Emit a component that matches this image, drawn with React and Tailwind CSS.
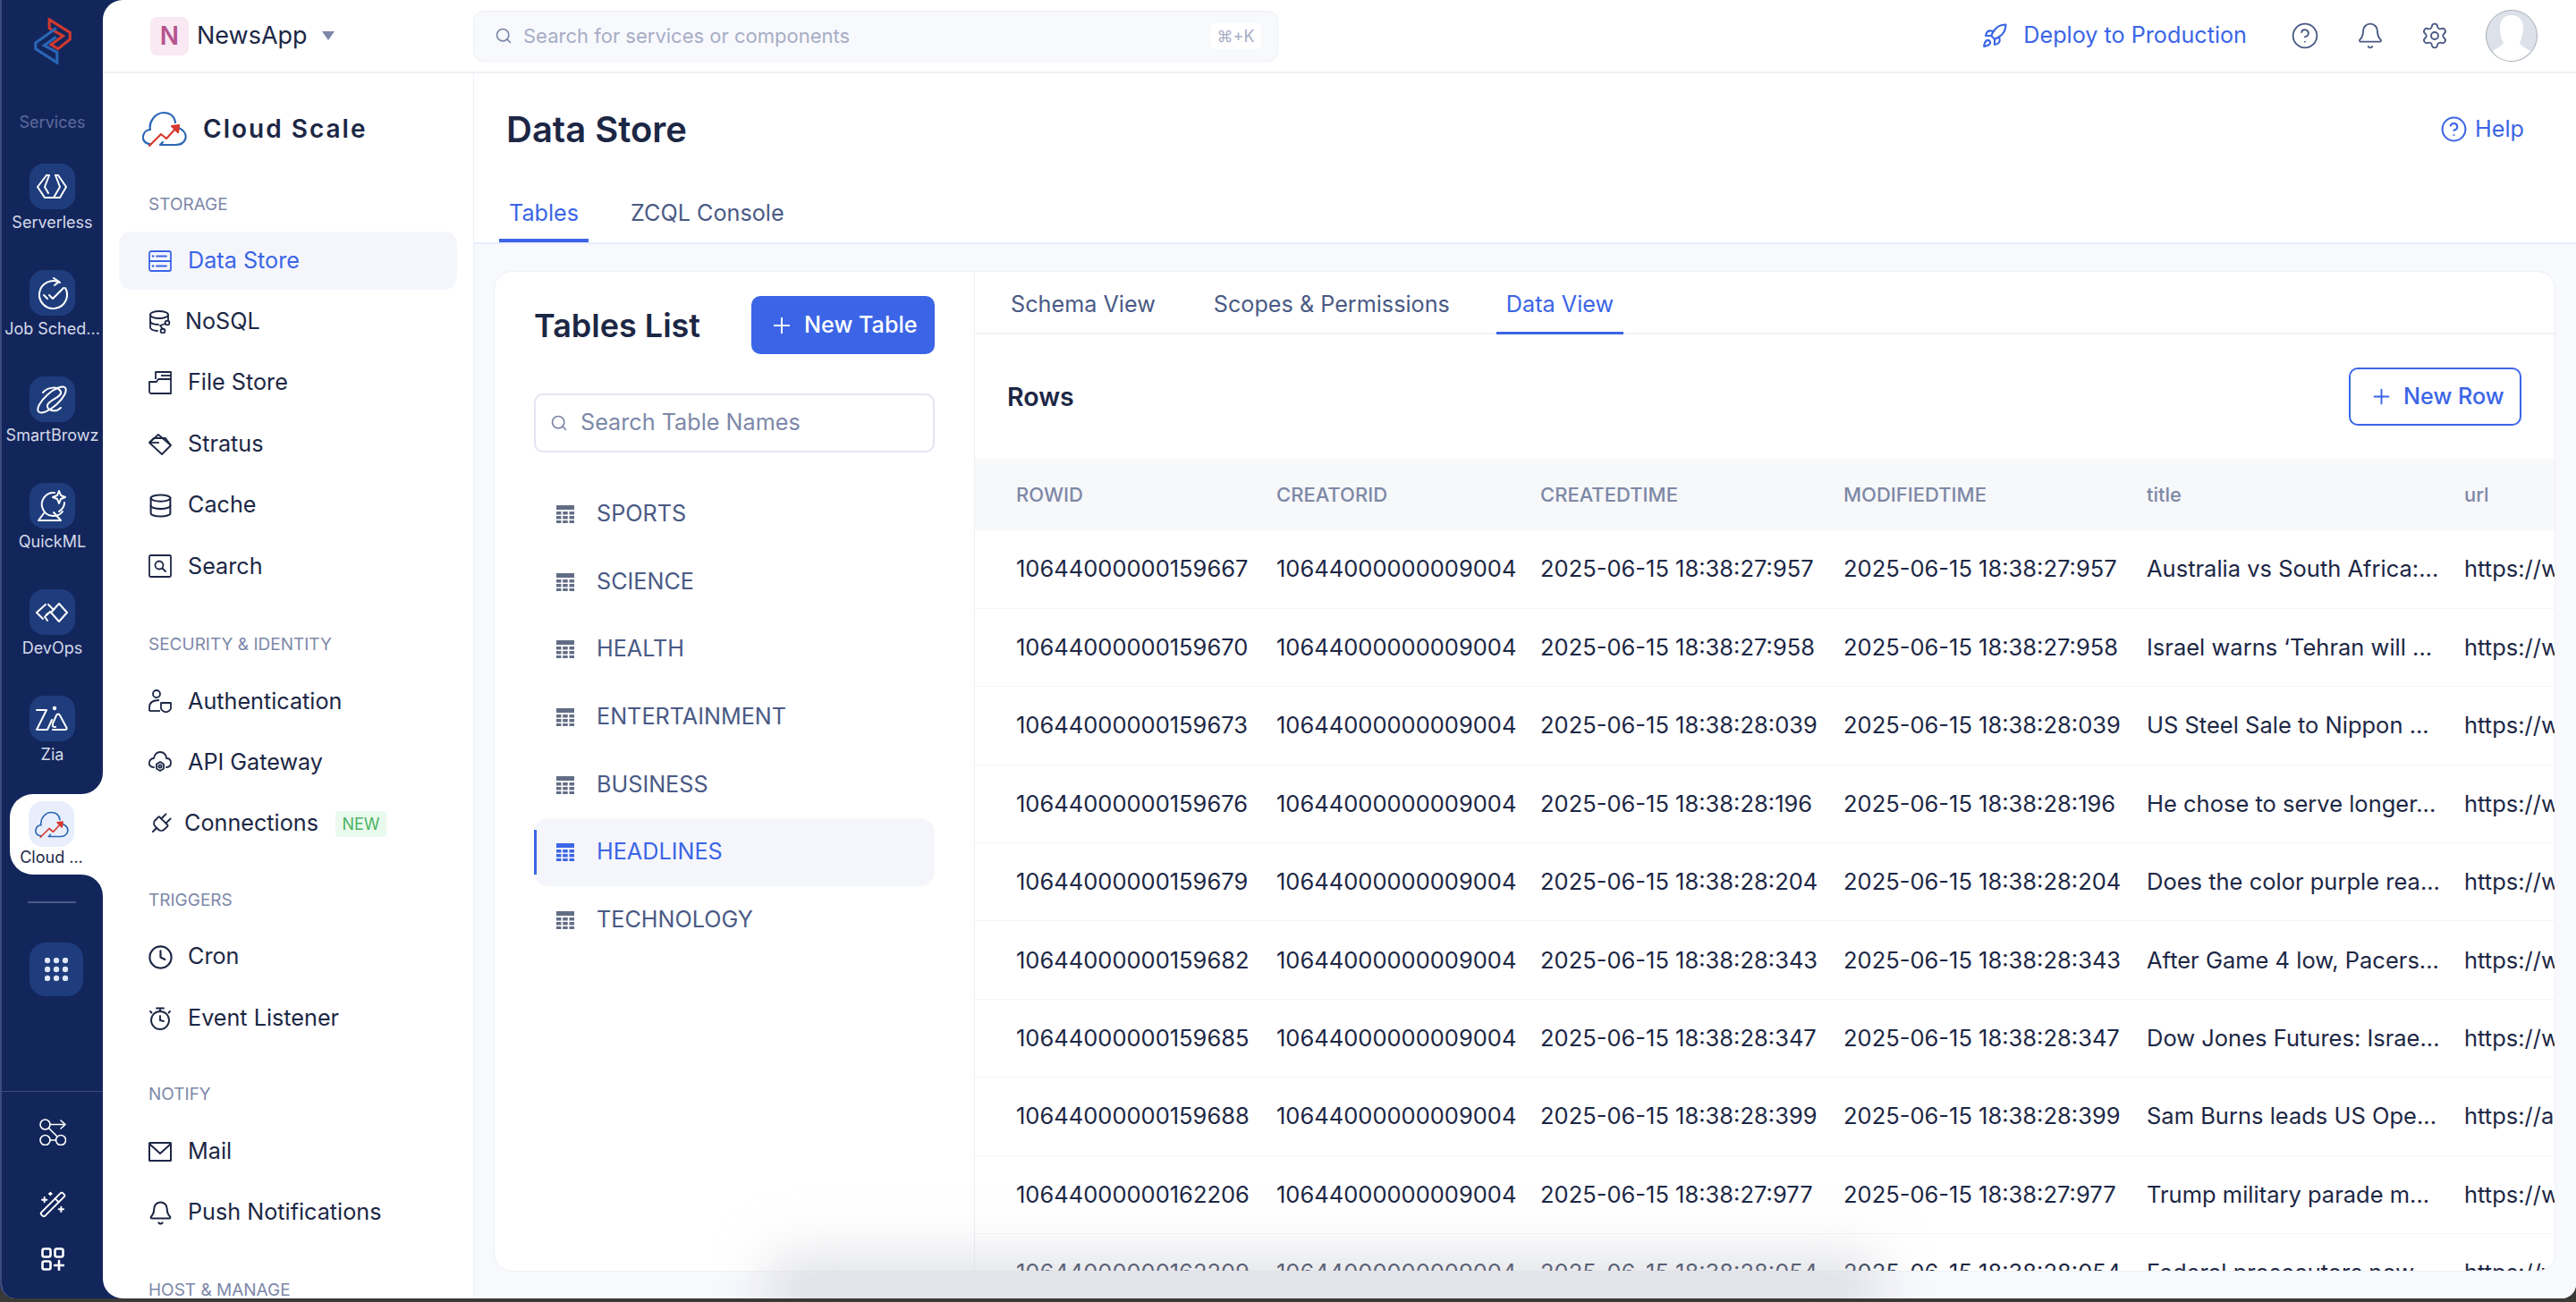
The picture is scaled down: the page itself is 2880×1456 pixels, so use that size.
import React from "react";
import {
  Bell,
  CircleHelp,
  Clock,
  Database,
  Plug,
  Plus,
  Rocket,
  Search,
  Settings,
  WandSparkles,
} from "lucide-react";

const RAIL_STROKE = { fill: "none", stroke: "white", strokeWidth: 2, strokeLinecap: "round", strokeLinejoin: "round" };

function CatalystLogo() {
  return (
    <svg viewBox="0 0 44 54" className="w-[44px] h-[52px]" fill="none" strokeWidth="3.2" strokeLinejoin="miter">
      <path d="M18 2 L42 17 V25 L28 36 L20 31 L34 21 L18 12 Z" stroke="#d0392f" />
      <path d="M26 12 L2 29 V36 L27 52 V40 L12 32 L26 22" stroke="#2a66b5" />
    </svg>
  );
}

function CloudLogo({ className }) {
  return (
    <svg viewBox="0 0 50 40" className={className} fill="none" strokeWidth="2.2" strokeLinecap="round" strokeLinejoin="round">
      <path d="M9 37 C3 37 0 32 1 28 C2 23 6 21 9 21 C7 12 15 2 24 2 C31 2 36 6 37 13" stroke="#2a66b5" />
      <path d="M41 19 C47 22 50 27 48 32 C46 37 41 38 37 38 H20 L23 35" stroke="#2a66b5" />
      <path d="M8 39 L21 26 L27 31 L39 18" stroke="#d8392f" />
      <path d="M33 17 L41 16 L40 24 Z" fill="#d8392f" stroke="#d8392f" />
    </svg>
  );
}

function ServerlessIcon() {
  return (
    <svg viewBox="0 0 36 30" className="w-[36px] h-[30px]" {...RAIL_STROKE}>
      <path d="M12 2 L2 15 L10 27 H27 L34 15 L25 2 L22 2" />
      <path d="M12 2 H15 L10 15 L14 22" />
      <path d="M22 2 L27 15 L20 27" />
    </svg>
  );
}

function JobIcon() {
  return (
    <svg viewBox="0 0 36 36" className="w-[36px] h-[36px]" {...RAIL_STROKE}>
      <path d="M27 6 A15.5 15.5 0 1 0 33 12" />
      <path d="M20 1 L26 5 L21 9" />
      <path d="M15 20 L19 24 L31 12" />
      <path d="M9 20 L13 24" />
    </svg>
  );
}

function BrowzIcon() {
  return (
    <svg viewBox="0 0 36 34" className="w-[36px] h-[34px]" {...RAIL_STROKE}>
      <ellipse cx="18" cy="17" rx="20" ry="7.5" transform="rotate(-42 18 17)" />
      <path d="M8 9 C14 2 25 2 28 8 C30 14 15 17 13 23 C12 29 22 32 28 26" />
    </svg>
  );
}

function QuickMlIcon() {
  return (
    <svg viewBox="0 0 36 36" className="w-[36px] h-[36px]" {...RAIL_STROKE}>
      <path d="M21 3 A13 13 0 1 0 30 24" />
      <path d="M20 25 L28 34 H3 L9 26" />
      <path d="M32 14 C32 18 29 22 26 24" />
      <path d="M26 1 L28 6 L33 8 L28 10 L26 15 L24 10 L19 8 L24 6 Z" />
    </svg>
  );
}

function DevOpsIcon() {
  return (
    <svg viewBox="0 0 36 22" className="w-[36px] h-[22px]" {...RAIL_STROKE}>
      <path d="M14 2 L20 8" />
      <path d="M11 2 L1 11 L8 18" />
      <path d="M16 10 L12 14 M13 12 L10 16 M11 17 L13 20" />
      <path d="M26 1 L35 11 L26 21 L17 11 Z" />
    </svg>
  );
}

function ZiaIcon() {
  return (
    <svg viewBox="0 0 36 30" className="w-[36px] h-[30px]" {...RAIL_STROKE}>
      <path d="M1 5 H12 L1 27 H13 L18 16" />
      <path d="M19 27 H33 C35 27 35 25 34 24 L27 11 C26 9 24 9 23 11 L19 20 C18 24 20 24 22 24" />
      <circle cx="21" cy="3" r="1.2" fill="white" />
    </svg>
  );
}

function GripIcon() {
  return (
    <svg viewBox="0 0 26 26" className="w-[26px] h-[26px]" fill="#dfe6f7">
      {[3, 13, 23].map((cy) =>
        [3, 13, 23].map((cx) => <circle key={`${cx}-${cy}`} cx={cx} cy={cy} r="3.2" />)
      )}
    </svg>
  );
}

function FlowIcon() {
  return (
    <svg viewBox="0 0 30 30" className="w-[30px] h-[30px]" {...RAIL_STROKE} strokeWidth="1.6">
      <circle cx="6.5" cy="6.5" r="5.5" />
      <circle cx="6.5" cy="24" r="5.5" />
      <circle cx="24" cy="24" r="5.5" />
      <path d="M12 24 H18.5" />
      <path d="M10.5 10.5 L20 20" />
      <path d="M12 6.5 H29 M24 2 L29 6.5 L24 11" />
    </svg>
  );
}

function AddAppsIcon() {
  return (
    <svg viewBox="0 0 26 26" className="w-[26px] h-[26px]" fill="none" stroke="white" strokeWidth="2.6" strokeLinejoin="round" strokeLinecap="round">
      <rect x="1.5" y="1.5" width="9" height="9" rx="2" />
      <rect x="15.5" y="1.5" width="9" height="9" rx="2" />
      <rect x="1.5" y="15.5" width="9" height="9" rx="2" />
      <path d="M20 15 V25 M15 20 H25" />
    </svg>
  );
}

function DataStoreIcon() {
  return (
    <svg viewBox="0 0 26 24" className="w-[26px] h-[24px]" fill="none" stroke="#3b65e6" strokeWidth="1.8" strokeLinecap="round">
      <rect x="1" y="1" width="24" height="22" rx="2" />
      <path d="M1 12 H25 M9 6.5 H20 M9 17.5 H20" />
      <path d="M5 6.5 H5.1 M5 17.5 H5.1" strokeWidth="2.6" />
    </svg>
  );
}

function NosqlIcon() {
  return (
    <svg viewBox="0 0 24 26" className="w-[24px] h-[26px]" fill="none" stroke="#1c2745" strokeWidth="1.8" strokeLinecap="round" strokeLinejoin="round">
      <ellipse cx="11" cy="5" rx="10" ry="4" />
      <path d="M1 5 V19 C1 21 4 23 9 23" />
      <path d="M21 5 V11" />
      <path d="M1 12 C1 14 4 16 10 16" />
      <circle cx="20" cy="14" r="2.4" />
      <circle cx="15" cy="23" r="2.4" />
      <path d="M18 15 L12 17 L15 21" />
    </svg>
  );
}

function FileStoreIcon() {
  return (
    <svg viewBox="0 0 26 26" className="w-[26px] h-[26px]" fill="none" stroke="#1c2745" strokeWidth="1.8" strokeLinejoin="round">
      <path d="M1 12 H9 L11 9 H25 V25 H3 C2 25 1 24 1 23 Z" />
      <path d="M8 9 V1 H25 V9" />
      <path d="M14 5 H25" />
    </svg>
  );
}

function StratusIcon() {
  return (
    <svg viewBox="0 0 26 24" className="w-[26px] h-[24px]" fill="none" stroke="#1c2745" strokeWidth="1.8" strokeLinejoin="round">
      <path d="M1 10 L11 1 L25 13 L15 23 Z" />
      <path d="M1 10 L6 5 L19 5 L25 13" />
      <path d="M1 10 L12 10" />
    </svg>
  );
}

function SearchBoxIcon() {
  return (
    <svg viewBox="0 0 26 26" className="w-[26px] h-[26px]" fill="none" stroke="#1c2745" strokeWidth="1.8" strokeLinecap="round">
      <rect x="1" y="1" width="24" height="24" rx="1.5" />
      <circle cx="12" cy="12" r="4.5" />
      <path d="M15.5 15.5 L19 19" />
    </svg>
  );
}

function AuthIcon() {
  return (
    <svg viewBox="0 0 26 26" className="w-[26px] h-[26px]" fill="none" stroke="#1c2745" strokeWidth="1.8" strokeLinejoin="round">
      <circle cx="9" cy="5" r="4" />
      <path d="M1 24 V20 C1 15 5 12 12 12" />
      <path d="M1 24 H13" />
      <path d="M14 15 H25 V21 C25 23 22 25 19.5 25.5 C17 25 14 23 14 21 Z" />
    </svg>
  );
}

function ApiIcon() {
  return (
    <svg viewBox="0 0 26 26" className="w-[26px] h-[26px]" fill="none" stroke="#1c2745" strokeWidth="1.8" strokeLinecap="round" strokeLinejoin="round">
      <path d="M6 18 C2 18 0 15 1 12 C2 9 4 8 6 8 C7 3 10 1 13 1 C17 1 20 4 20 8 C23 8 25 10 25 13 C25 16 23 18 20 18" />
      <path d="M13 12 L17 14.5 V19.5 L13 22 L9 19.5 V14.5 Z" />
      <circle cx="13" cy="17" r="1.6" />
    </svg>
  );
}

function StopwatchIcon() {
  return (
    <svg viewBox="0 0 26 26" className="w-[26px] h-[26px]" fill="none" stroke="#1c2745" strokeWidth="1.9" strokeLinecap="round">
      <circle cx="13" cy="15" r="10" />
      <path d="M9 1.5 H17 M13 1.5 V5" />
      <path d="M13 10 V15 L17 16" />
      <path d="M2 5 L3.5 6.5 M24 5 L22.5 6.5" />
    </svg>
  );
}

function MailIcon() {
  return (
    <svg viewBox="0 0 26 22" className="w-[26px] h-[22px]" fill="none" stroke="#1c2745" strokeWidth="2" strokeLinejoin="round">
      <rect x="1" y="1" width="24" height="20" rx="0.5" />
      <path d="M1 2 L13 13 L25 2" />
    </svg>
  );
}

function TableIcon({ className }) {
  return (
    <svg viewBox="0 0 20 20" className={className} fill="currentColor">
      <rect x="0" y="0" width="20" height="5" />
      <rect x="0" y="7" width="5.5" height="3.5" />
      <rect x="7.2" y="7" width="5.5" height="3.5" />
      <rect x="14.5" y="7" width="5.5" height="3.5" />
      <rect x="0" y="12" width="5.5" height="3.5" />
      <rect x="7.2" y="12" width="5.5" height="3.5" />
      <rect x="14.5" y="12" width="5.5" height="3.5" />
      <rect x="0" y="17" width="5.5" height="3" />
      <rect x="7.2" y="17" width="5.5" height="3" />
      <rect x="14.5" y="17" width="5.5" height="3" />
    </svg>
  );
}

function Avatar() {
  return (
    <svg viewBox="0 0 58 58" className="ml-[41px] w-[58px] h-[58px]">
      <circle cx="29" cy="29" r="28.5" fill="#dde1ea" stroke="#a8adb6" />
      <path
        d="M16 20 C16 10 22 6 29 6 C37 6 42 11 42 20 C42 28 39 34 38 37 C40 41 46 43 50 46 C44 53 37 57 29 57 C20 57 12 53 8 46 C12 43 18 41 20 37 C18 33 16 28 16 20 Z"
        fill="white"
      />
    </svg>
  );
}

function RailItem({ icon, label }) {
  return (
    <div className="h-[119px] flex flex-col items-center">
      <div className="w-[51px] h-[51px] rounded-[16px] bg-[#1f3d7c] flex items-center justify-center">
        {icon}
      </div>
      <span className="mt-[3px] text-[18px] leading-[24px] text-[#d5daea] whitespace-nowrap">{label}</span>
    </div>
  );
}

function Rail() {
  return (
    <aside className="w-[115px] shrink-0 flex flex-col border-l-2 border-[#3d4a7c] bg-[#13265c] rounded-bl-[16px] overflow-hidden">
      {/* top block, its corner curves into the white pill */}
      <div className="h-[888px] bg-white">
        <div className="h-full bg-[#13265c] rounded-br-[24px] flex flex-col items-center">
          <div className="mt-[20px]">
            <CatalystLogo />
          </div>
          <div className="mt-[9px] w-[43px] h-px bg-[#3c4b7c]" />
          <span className="mt-[44px] text-[18px] leading-[24px] text-[#5d6b9c]">Services</span>
          <div className="mt-[34px]">
            <RailItem icon={<ServerlessIcon />} label="Serverless" />
            <RailItem icon={<JobIcon />} label="Job Sched..." />
            <RailItem icon={<BrowzIcon />} label="SmartBrowz" />
            <RailItem icon={<QuickMlIcon />} label="QuickML" />
            <RailItem icon={<DevOpsIcon />} label="DevOps" />
            <RailItem icon={<ZiaIcon />} label="Zia" />
          </div>
        </div>
      </div>
      <div className="h-[90px] bg-[#13265c] pl-[9px]">
        <div className="h-full bg-white rounded-l-[26px] pt-[8px] pl-[21px]">
          <div className="w-[51px] h-[51px] rounded-[16px] bg-[#e8eefb] flex items-center justify-center">
            <CloudLogo className="w-[38px] h-[30px]" />
          </div>
          <span className="block -ml-[10px] w-[71px] text-center text-[18px] leading-[24px] text-[#1c2745] whitespace-nowrap">
            Cloud ...
          </span>
        </div>
      </div>
      <div className="flex-1 bg-white">
        <div className="h-full bg-[#13265c] rounded-tr-[24px] flex flex-col">
          <div className="mt-[30px] ml-[29px] w-[54px] h-[2px] bg-[#4a5a88]" />
          <div className="mt-[44px] ml-[31px] w-[60px] h-[60px] rounded-[18px] bg-[#1f3d7c] flex items-center justify-center">
            <GripIcon />
          </div>
          <div className="mt-[106px] h-px bg-[#3c4b7c]" />
          <div className="mt-[30px] flex flex-col items-center">
            <FlowIcon />
            <WandSparkles className="mt-[50px] w-[32px] h-[32px] text-white" strokeWidth={1.5} />
            <div className="mt-[32px]">
              <AddAppsIcon />
            </div>
          </div>
        </div>
      </div>
    </aside>
  );
}

function NavSection({ title, children, className }) {
  return (
    <div className={className}>
      <div className="pl-[51px] text-[19px] leading-[24px] text-[#7d88a9] uppercase whitespace-nowrap">{title}</div>
      {children}
    </div>
  );
}

function NavItem({ icon, label, active, badge, gap = "gap-[18px]" }) {
  return (
    <div
      className={`h-[65px] mt-[3.4px] ml-[18px] w-[378px] pl-[33px] rounded-[14px] flex items-center text-[25.2px] ${gap} ${
        active ? "bg-[#f5f6fc] text-[#3b65e6]" : "text-[#1c2745]"
      }`}
    >
      <span className="w-[26px] flex justify-center shrink-0">{icon}</span>
      <span>{label}</span>
      {badge}
    </div>
  );
}

const lucideNav = "w-[29px] h-[29px] text-[#1c2745] shrink-0";

function ServiceNav() {
  return (
    <nav className="w-[415px] shrink-0 h-full overflow-hidden border-r border-[#eef0f8] pt-[42px]">
      <div className="pl-[44px] h-[40px] flex items-center gap-[18px]">
        <CloudLogo className="w-[50px] h-[40px]" />
        <span className="text-[28px] font-semibold tracking-[2px] text-[#1c2745]">Cloud Scale</span>
      </div>
      <NavSection title="Storage" className="mt-[53px]">
        <div className="mt-[18px]">
          <NavItem active icon={<DataStoreIcon />} label="Data Store" />
          <NavItem icon={<NosqlIcon />} label="NoSQL" gap="gap-[15px]" />
          <NavItem icon={<FileStoreIcon />} label="File Store" />
          <NavItem icon={<StratusIcon />} label="Stratus" />
          <NavItem icon={<Database className={lucideNav} strokeWidth={1.7} />} label="Cache" />
          <NavItem icon={<SearchBoxIcon />} label="Search" />
        </div>
      </NavSection>
      <NavSection title="Security & Identity" className="mt-[43px]">
        <div className="mt-[19px]">
          <NavItem icon={<AuthIcon />} label="Authentication" />
          <NavItem icon={<ApiIcon />} label="API Gateway" />
          <NavItem
            icon={<Plug className="w-[29px] h-[29px] shrink-0 rotate-45 text-[#1c2745]" strokeWidth={1.6} />}
            label="Connections"
            gap="gap-[14px]"
            badge={
              <span className="ml-[5px] w-[57px] h-[29px] rounded-[4px] bg-[#eafaee] text-[#4bb463] text-[18px] flex items-center justify-center">
                NEW
              </span>
            }
          />
        </div>
      </NavSection>
      <NavSection title="Triggers" className="mt-[41px]">
        <div className="mt-[19px]">
          <NavItem icon={<Clock className={lucideNav} strokeWidth={1.8} />} label="Cron" />
          <NavItem icon={<StopwatchIcon />} label="Event Listener" />
        </div>
      </NavSection>
      <NavSection title="Notify" className="mt-[41px]">
        <div className="mt-[19px]">
          <NavItem icon={<MailIcon />} label="Mail" />
          <NavItem icon={<Bell className={lucideNav} strokeWidth={1.7} />} label="Push Notifications" />
        </div>
      </NavSection>
      <NavSection title="Host & Manage" className="mt-[42px]" />
    </nav>
  );
}

function TopBar() {
  return (
    <header className="h-[82px] shrink-0 border-b-2 border-[#f0f1f6] flex items-center">
      <div className="w-[414px] shrink-0 flex items-center pl-[53px]">
        <div className="w-[43px] h-[43px] rounded-[8px] bg-[#f9e9f3] text-[#b5558f] text-[28px] font-semibold flex items-center justify-center">
          N
        </div>
        <span className="ml-[9px] text-[27px] text-[#1c2745]">NewsApp</span>
        <svg viewBox="0 0 14 10" className="ml-[16px] w-[14px] h-[10px]" fill="#7d88a9">
          <path d="M0 0 H14 L7 10 Z" />
        </svg>
      </div>
      <div className="w-[900px] h-[57px] rounded-[12px] border border-[#eef0f8] bg-[#f8f9fd] flex items-center pl-[23px] pr-[18px]">
        <Search className="w-[20px] h-[20px] text-[#7d88a9]" strokeWidth={2} />
        <span className="ml-[12px] text-[22px] text-[#a6adc6]">Search for services or components</span>
        <span className="ml-auto w-[57px] h-[29px] rounded-[6px] bg-white text-[#a6adc6] text-[18px] flex items-center justify-center">
          ⌘+K
        </span>
      </div>
      <div className="flex-1 flex items-center justify-end pr-[43px]">
        <Rocket className="w-[30px] h-[30px] text-[#3b65e6]" strokeWidth={1.7} />
        <span className="ml-[17px] text-[25.2px] text-[#3b65e6]">Deploy to Production</span>
        <CircleHelp className="ml-[49px] w-[32px] h-[32px] text-[#4a5a85]" strokeWidth={1.4} />
        <Bell className="ml-[41px] w-[32px] h-[32px] text-[#4a5a85]" strokeWidth={1.4} />
        <Settings className="ml-[40px] w-[32px] h-[32px] text-[#4a5a85]" strokeWidth={1.4} />
        <Avatar />
      </div>
    </header>
  );
}

const TABLE_NAMES = ["SPORTS", "SCIENCE", "HEALTH", "ENTERTAINMENT", "BUSINESS", "HEADLINES", "TECHNOLOGY"];

function TablesList() {
  return (
    <div className="w-[537px] shrink-0 border-r border-[#eef0f6] pl-[44px] pr-[44px] pt-[27px]">
      <div className="flex items-center justify-between">
        <h2 className="text-[36px] font-semibold text-[#1c2745]">Tables List</h2>
        <button className="w-[205px] h-[65px] rounded-[10px] bg-[#3b65e6] text-white text-[25.2px] font-medium flex items-center pl-[20px] gap-[11px]">
          <Plus className="w-[28px] h-[28px]" strokeWidth={1.7} />
          New Table
        </button>
      </div>
      <div className="mt-[44px] h-[66px] rounded-[10px] border-2 border-[#e2e5f1] flex items-center pl-[16px]">
        <Search className="w-[20px] h-[20px] text-[#7d88a9]" strokeWidth={2} />
        <span className="ml-[14px] text-[25.2px] text-[#7d88a9]">Search Table Names</span>
      </div>
      <ul className="mt-[31px]">
        {TABLE_NAMES.map((name) => {
          const active = name === "HEADLINES";
          return (
            <li
              key={name}
              className={`relative h-[75.7px] pl-[25px] flex items-center gap-[25px] text-[25.2px] rounded-[16px] ${
                active ? "bg-[#f5f6fc] text-[#3b65e6]" : "text-[#4a5a85]"
              }`}
            >
              {active && <span className="absolute left-0 top-[13px] w-[3px] h-[50px] bg-[#3b65e6]" />}
              <TableIcon className={`w-[20px] h-[20px] ${active ? "text-[#3b65e6]" : "text-[#626d85]"}`} />
              {name}
            </li>
          );
        })}
      </ul>
    </div>
  );
}

const ROWS = [
  ["10644000000159667", "2025-06-15 18:38:27:957", "Australia vs South Africa:...", "https://www"],
  ["10644000000159670", "2025-06-15 18:38:27:958", "Israel warns ‘Tehran will ...", "https://www"],
  ["10644000000159673", "2025-06-15 18:38:28:039", "US Steel Sale to Nippon ...", "https://www"],
  ["10644000000159676", "2025-06-15 18:38:28:196", "He chose to serve longer...", "https://www"],
  ["10644000000159679", "2025-06-15 18:38:28:204", "Does the color purple rea...", "https://www"],
  ["10644000000159682", "2025-06-15 18:38:28:343", "After Game 4 low, Pacers...", "https://www"],
  ["10644000000159685", "2025-06-15 18:38:28:347", "Dow Jones Futures: Israe...", "https://www"],
  ["10644000000159688", "2025-06-15 18:38:28:399", "Sam Burns leads US Ope...", "https://a"],
  ["10644000000162206", "2025-06-15 18:38:27:977", "Trump military parade m...", "https://www"],
  ["10644000000162209", "2025-06-15 18:38:28:054", "Federal prosecutors now...", "https://www"],
];

const HEADERS = ["ROWID", "CREATORID", "CREATEDTIME", "MODIFIEDTIME", "title", "url"];

function DataPanel() {
  return (
    <div className="flex-1 min-w-0 flex flex-col">
      <div className="h-[70px] shrink-0 border-b-2 border-[#f0f1f6] flex pl-[40px] gap-[65px] text-[25.2px] text-[#4a5a85]">
        <span className="h-[70px] pt-[18px]">Schema View</span>
        <span className="h-[70px] pt-[18px]">Scopes &amp; Permissions</span>
        <span className="-ml-[13px] h-[70px] pt-[18px] px-[11px] text-[#3b65e6] border-b-[3px] border-[#3b65e6]">Data View</span>
      </div>
      <div className="h-[139px] shrink-0 pl-[36px] pr-[37px] flex items-center justify-between">
        <h3 className="pt-[2px] text-[28.5px] font-semibold text-[#1c2745]">Rows</h3>
        <button className="w-[193px] h-[65px] rounded-[10px] border-2 border-[#3b65e6] text-[#3b65e6] text-[25.2px] font-medium flex items-center pl-[21px] gap-[11px]">
          <Plus className="w-[27px] h-[27px]" strokeWidth={1.7} />
          New Row
        </button>
      </div>
      <div className="flex-1 min-h-0 overflow-hidden">
        <table className="table-fixed w-[1767px] border-collapse text-left">
          <colgroup>
            <col className="w-[337px]" />
            <col className="w-[295px]" />
            <col className="w-[339px]" />
            <col className="w-[339px]" />
            <col className="w-[355px]" />
            <col className="w-[102px]" />
          </colgroup>
          <thead>
            <tr className="h-[80px] bg-[#f7f8fa] text-[22px] font-medium text-[#7d88a6]">
              {HEADERS.map((h, i) => (
                <th key={h} className={`font-medium ${i === 0 ? "pl-[46px]" : ""}`}>
                  {h}
                </th>
              ))}
            </tr>
          </thead>
          <tbody className="text-[25.5px] text-[#1c2745]">
            {ROWS.map((r) => (
              <tr key={r[0]} className="h-[87.4px] border-b border-[#f4f5f9]">
                <td className="pl-[46px]">{r[0]}</td>
                <td>10644000000009004</td>
                <td>{r[1]}</td>
                <td>{r[1]}</td>
                <td>{r[2]}</td>
                <td className="overflow-hidden whitespace-nowrap">{r[3]}</td>
              </tr>
            ))}
          </tbody>
        </table>
      </div>
    </div>
  );
}

export default function App() {
  return (
    <div className="w-[2880px] h-[1456px] bg-[#3a3936] overflow-hidden font-[Inter,sans-serif]">
      <div className="relative w-full h-[1452px] flex bg-[#13265c] rounded-b-[16px] overflow-hidden">
        <Rail />
        <main className="flex-1 min-w-0 flex flex-col bg-white rounded-l-[22px] overflow-hidden">
          <TopBar />
          <div className="flex-1 min-h-0 flex">
            <ServiceNav />
            <div className="flex-1 min-w-0 flex flex-col bg-[#f8f9fd] pr-[23px]">
              <div className="-mr-[23px] h-[191px] shrink-0 bg-white border-b-2 border-[#e9eefa]">
                <div className="h-[125px] pl-[36px] pr-[58px] flex items-center justify-between">
                  <h1 className="text-[40px] font-semibold text-[#1c2745]">Data Store</h1>
                  <div className="flex items-center gap-[8px] text-[25.2px] text-[#3b65e6]">
                    <CircleHelp className="w-[31px] h-[31px]" strokeWidth={1.6} />
                    Help
                  </div>
                </div>
                <div className="pl-[28px] flex text-[25.2px] text-[#4a5a85] gap-[47px]">
                  <span className="h-[64px] pt-[13px] px-[11px] text-[#3b65e6] border-b-4 border-[#3b65e6]">Tables</span>
                  <span className="pt-[13px]">ZCQL Console</span>
                </div>
              </div>
              <div className="mt-[30px] ml-[22px] h-[1119px] shrink-0 flex bg-white rounded-[20px] border border-[#eef0f6] overflow-hidden">
                <TablesList />
                <DataPanel />
              </div>
            </div>
          </div>
        </main>
        <div className="absolute -bottom-[14px] left-[860px] w-[1240px] h-[80px] bg-gradient-to-t from-[#c8cad2] to-transparent blur-[30px] pointer-events-none" />
      </div>
    </div>
  );
}
